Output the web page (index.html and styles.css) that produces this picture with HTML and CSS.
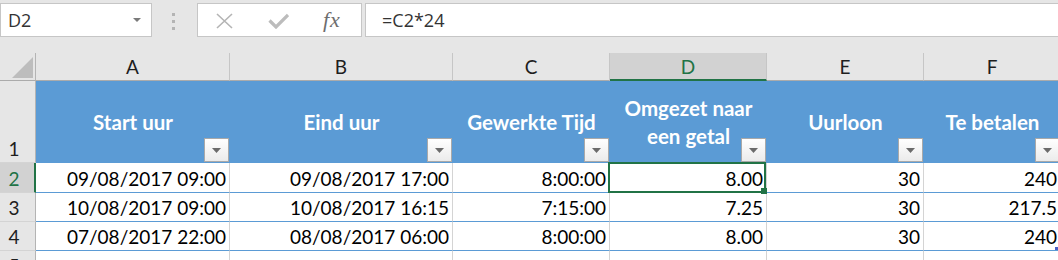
FILE: index.html
```html
<!DOCTYPE html>
<html lang="nl">
<head>
<meta charset="utf-8">
<title>Excel</title>
<link rel="stylesheet" href="styles.css">
</head>
<body>
<div class="app">
  <div class="toolbar">
    <div class="namebox">
      <span>D2</span>
      <svg class="nb-arrow" width="8" height="4" viewBox="0 0 8 4"><polygon points="0,0 8,0 4,4" fill="#7a7a7a"/></svg>
    </div>
    <div class="grip"><i></i><i></i><i></i></div>
    <div class="fbtns">
      <svg class="ic-x" width="17" height="16" viewBox="0 0 17 16"><path d="M1 1 L16 15 M16 1 L1 15" stroke="#b4b4b4" stroke-width="1.6" fill="none"/></svg>
      <svg class="ic-ok" width="21" height="16" viewBox="0 0 21 16"><path d="M1.5 7.5 L8 14 L20 2" stroke="#bcbcbc" stroke-width="3.2" fill="none"/></svg>
      <span class="fx">fx</span>
    </div>
    <div class="formula">=C2*24</div>
  </div>

  <div class="sheet">
    <div class="corner"><div class="tri"></div></div>
    <div class="ch">A</div>
    <div class="ch">B</div>
    <div class="ch">C</div>
    <div class="ch selc">D</div>
    <div class="ch">E</div>
    <div class="ch">F</div>

    <div class="rh">1</div>
    <div class="h"><span class="t">Start uur</span><span class="fb"><svg width="9" height="5" viewBox="0 0 9 5"><polygon points="0,0 9,0 4.5,5" fill="#6b6b6b"/></svg></span></div>
    <div class="h"><span class="t">Eind uur</span><span class="fb"><svg width="9" height="5" viewBox="0 0 9 5"><polygon points="0,0 9,0 4.5,5" fill="#6b6b6b"/></svg></span></div>
    <div class="h"><span class="t">Gewerkte Tijd</span><span class="fb"><svg width="9" height="5" viewBox="0 0 9 5"><polygon points="0,0 9,0 4.5,5" fill="#6b6b6b"/></svg></span></div>
    <div class="h"><span class="t">Omgezet naar<br>een getal</span><span class="fb"><svg width="9" height="5" viewBox="0 0 9 5"><polygon points="0,0 9,0 4.5,5" fill="#6b6b6b"/></svg></span></div>
    <div class="h"><span class="t">Uurloon</span><span class="fb"><svg width="9" height="5" viewBox="0 0 9 5"><polygon points="0,0 9,0 4.5,5" fill="#6b6b6b"/></svg></span></div>
    <div class="h"><span class="t">Te betalen</span><span class="fb"><svg width="9" height="5" viewBox="0 0 9 5"><polygon points="0,0 9,0 4.5,5" fill="#6b6b6b"/></svg></span></div>

    <div class="rh selr">2</div>
    <div class="c">09/08/2017 09:00</div>
    <div class="c">09/08/2017 17:00</div>
    <div class="c">8:00:00</div>
    <div class="c sel">8.00</div>
    <div class="c">30</div>
    <div class="c">240</div>

    <div class="rh">3</div>
    <div class="c">10/08/2017 09:00</div>
    <div class="c">10/08/2017 16:15</div>
    <div class="c">7:15:00</div>
    <div class="c">7.25</div>
    <div class="c">30</div>
    <div class="c">217.5</div>

    <div class="rh">4</div>
    <div class="c">07/08/2017 22:00</div>
    <div class="c">08/08/2017 06:00</div>
    <div class="c">8:00:00</div>
    <div class="c">8.00</div>
    <div class="c">30</div>
    <div class="c tbl-end">240</div>

    <div class="rh">5</div>
    <div class="c e"></div>
    <div class="c e"></div>
    <div class="c e"></div>
    <div class="c e"></div>
    <div class="c e"></div>
    <div class="c e"></div>
  </div>
</div>
</body>
</html>
```

FILE: styles.css
```css
html, body {
  margin: 0;
  padding: 0;
}
body {
  background: #e6e6e6;
  overflow: hidden;
  font-family: Lato, "Liberation Sans", sans-serif;
}
.app {
  width: 1058px;
  height: 260px;
  overflow: hidden;
}

/* ---------- toolbar ---------- */
.toolbar {
  display: flex;
  align-items: flex-start;
  height: 53px;
  padding-top: 3px;
  box-sizing: border-box;
}
.namebox {
  width: 152px;
  height: 34px;
  box-sizing: border-box;
  background: #fff;
  border: 1px solid #c6c6c6;
  display: flex;
  align-items: center;
  justify-content: space-between;
  padding: 0 10px 0 7px;
  font-family: "Open Sans", sans-serif;
  font-size: 18px;
  color: #333;
}
.nb-arrow {
  margin-top: -1px;
}
.grip {
  width: 45px;
  display: flex;
  flex-direction: column;
  align-items: center;
  gap: 4px;
  padding: 10px 3px 0 0;
  box-sizing: border-box;
}
.grip i {
  display: block;
  width: 3px;
  height: 3px;
  background: #b4b4b4;
}
.fbtns {
  width: 165px;
  height: 34px;
  box-sizing: border-box;
  background: #fff;
  border: 1px solid #c6c6c6;
  display: flex;
  align-items: center;
  padding-left: 18px;
}
.ic-x {
  margin-top: 1px;
}
.ic-ok {
  margin-left: 35px;
  margin-top: 1px;
}
.fx {
  margin-left: 34px;
  font-family: "Liberation Serif", serif;
  font-style: italic;
  font-size: 22px;
  color: #6e6e6e;
  letter-spacing: 1px;
}
.formula {
  flex: 1;
  margin-left: 3px;
  margin-right: -3px;
  height: 34px;
  box-sizing: border-box;
  background: #fff;
  border: 1px solid #c6c6c6;
  display: flex;
  align-items: center;
  padding-left: 16px;
  font-family: "Open Sans", sans-serif;
  font-size: 18px;
  color: #333;
}

/* ---------- sheet ---------- */
.sheet {
  display: grid;
  grid-template-columns: 36px 194px 223px 157px 157px 157px 137px;
  grid-template-rows: 28px 82px 30px 29px 29px 29px;
  width: 1061px;
  font-size: 19px;
  line-height: 23px;
  color: #000;
}
.corner {
  border-right: 1px solid #b4b4b4;
  border-bottom: 1px solid #ababab;
  display: flex;
  justify-content: flex-end;
  align-items: flex-end;
  padding: 0 2px 2px 0;
}
.tri {
  width: 21px;
  height: 21px;
  background: #bdbdbd;
  clip-path: polygon(100% 0, 100% 100%, 0 100%);
}
.ch {
  border-right: 1px solid #c6c6c6;
  border-bottom: 1px solid #ababab;
  text-align: center;
  padding-top: 2px;
  color: #1e1e1e;
}
.ch.selc {
  background: #d2d2d2;
  color: #217346;
  border-bottom: 2px solid #217346;
}

.rh {
  background: #e6e6e6;
  border-right: 1px solid #b4b4b4;
  border-bottom: 1px solid #d4d4d4;
  display: flex;
  align-items: flex-end;
  justify-content: center;
  padding: 0 7px 2px 0;
  color: #1e1e1e;
}
.rh.selr {
  background: #d2d2d2;
  color: #217346;
  border-right: 2px solid #217346;
  padding-right: 6px;
}

.h {
  background: #5b9bd5;
  color: #fff;
  font-weight: 700;
  font-size: 20.5px;
  display: grid;
}
.h .t {
  grid-area: 1 / 1;
  align-self: center;
  justify-self: center;
  text-align: center;
  line-height: 28px;
}
.fb {
  grid-area: 1 / 1;
  align-self: end;
  justify-self: end;
  width: 25px;
  height: 24px;
  box-sizing: border-box;
  margin: 0 1px 1px 0;
  border: 1px solid #a9a9a9;
  background: linear-gradient(#ffffff, #ebebeb);
  display: flex;
  align-items: center;
  justify-content: center;
}

.c {
  background: #fff;
  border-right: 1px solid #d4d4d4;
  border-bottom: 1px solid #5b9bd5;
  display: flex;
  align-items: flex-end;
  justify-content: flex-end;
  padding: 0 3px 2px 0;
  white-space: nowrap;
}
.c.e {
  border-bottom: none;
}
.sel {
  position: relative;
}
.sel::after {
  content: "";
  position: absolute;
  left: -2px;
  top: -1px;
  right: 0;
  bottom: -1px;
  border: 2px solid #217346;
}
.sel::before {
  content: "";
  position: absolute;
  right: -1px;
  bottom: -2px;
  width: 6px;
  height: 6px;
  background: #217346;
  z-index: 2;
}
.tbl-end {
  position: relative;
}
.tbl-end::after {
  content: "";
  position: absolute;
  right: 2px;
  bottom: 0;
  width: 3px;
  height: 3px;
  background: #4a5fc8;
}
```
